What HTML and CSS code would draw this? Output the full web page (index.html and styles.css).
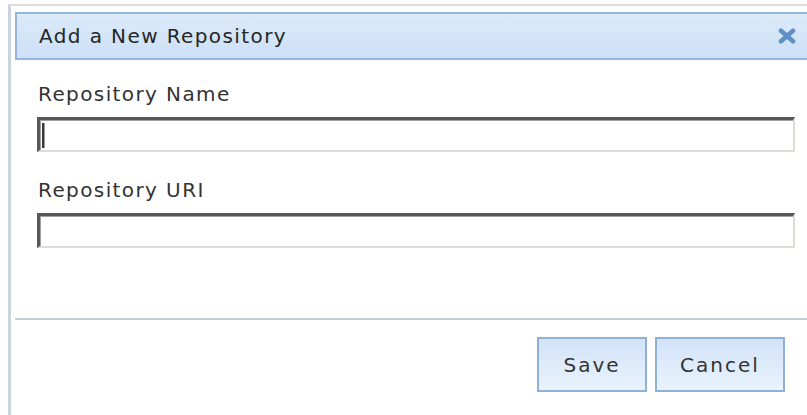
FILE: index.html
```html
<!DOCTYPE html>
<html lang="en">
<head>
<meta charset="utf-8">
<title>Add a New Repository</title>
<link rel="stylesheet" href="styles.css">
</head>
<body>
<div class="frame">
  <div class="dialog">
    <div class="titlebar">
      <span class="title">Add a New Repository</span>
      <button class="close" type="button" aria-label="Close">
        <svg width="18" height="16" viewBox="0 0 18 16" aria-hidden="true">
          <path d="M3 2.8 L15 13.2 M15 2.8 L3 13.2" stroke="#6090c3" stroke-width="4.6" stroke-linecap="round" fill="none"/>
        </svg>
      </button>
    </div>

    <form class="form">
      <label class="label" for="repo-name">Repository Name</label>
      <div class="field field--focused">
        <input class="input" id="repo-name" type="text">
      </div>
      <label class="label label--second" for="repo-uri">Repository URI</label>
      <div class="field">
        <input class="input" id="repo-uri" type="text">
      </div>
    </form>

    <div class="divider"></div>

    <div class="actions">
      <button class="btn btn--save" type="button">Save</button>
      <button class="btn btn--cancel" type="button">Cancel</button>
    </div>
  </div>
</div>
</body>
</html>
```

FILE: styles.css
```css
html, body {
  margin: 0;
  padding: 0;
  background: #ffffff;
  height: 100%;
  overflow: hidden;
}

body {
  font-family: "DejaVu Sans", Verdana, sans-serif;
  font-size: 20px;
  letter-spacing: 1.4px;
  color: #333333;
}

/* outer window frame: grey top edge, blue-grey left edge */
.frame {
  margin: 4px 0 0 8px;
  border-top: 2px solid #dedede;
  border-left: 3px solid #cbd3de;
  height: 420px;
}

.dialog {
  display: flex;
  flex-direction: column;
  padding-top: 6px;
}

/* title bar */
.titlebar {
  margin-left: 4px;
  height: 48px;
  box-sizing: border-box;
  border: 2px solid #95b5da;
  border-right: none;
  background: linear-gradient(#dceafa, #cde0f6);
  display: flex;
  align-items: center;
  justify-content: space-between;
  padding: 0 11px 0 22px;
}

.title {
  line-height: 24px;
  color: #262626;
}

.close {
  padding: 0;
  border: none;
  background: none;
  width: 18px;
  height: 16px;
  display: block;
}

.close svg {
  display: block;
}

/* form body */
.form {
  display: flex;
  flex-direction: column;
  padding: 22px 12px 0 26px;
  margin: 0;
}

.label {
  line-height: 24px;
  padding-left: 1px;
  color: #333333;
}

.label--second {
  margin-top: 26px;
}

.field {
  position: relative;
  margin-top: 11px;
}

.input {
  display: block;
  width: 100%;
  height: 35px;
  box-sizing: border-box;
  margin: 0;
  padding: 0 6px;
  border-style: solid;
  border-width: 3px 2px 2px 3px;
  border-color: #565656 #dcdcd5 #dcdcd5 #585858;
  box-shadow: inset 1px 1px 0 #a0a0a0;
  background: #ffffff;
  font: inherit;
  outline: none;
}

/* text caret in the focused field */
.field--focused::after {
  content: "";
  position: absolute;
  left: 5px;
  top: 6px;
  width: 2px;
  height: 25px;
  background: #3a3a3a;
  box-shadow: 1px 0 0 #9a9a9a;
}

.divider {
  margin: 70px 0 0 4px;
  height: 2px;
  background: #c3ccd8;
}

/* footer buttons */
.actions {
  display: flex;
  justify-content: flex-end;
  gap: 8px;
  padding: 17px 22px 0 0;
}

.btn {
  height: 55px;
  box-sizing: border-box;
  border: 2px solid #8fb0d7;
  background: linear-gradient(#d2e3f8, #e9f3fd);
  font: inherit;
  letter-spacing: 2px;
  color: #333333;
  padding: 0;
  margin: 0;
}

.btn--save {
  width: 110px;
}

.btn--cancel {
  width: 130px;
}
```
